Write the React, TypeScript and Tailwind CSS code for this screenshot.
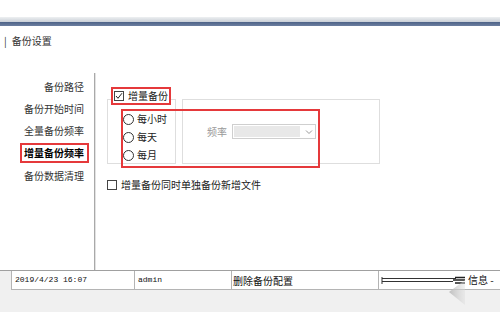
import React from "react";

const cjk = { fontFamily: '"Noto Sans CJK SC", "Noto Sans", sans-serif' };

function Radio({ label }: { label: string }) {
  return (
    <div className="flex h-[18px] items-center">
      <span className="box-border h-[11px] w-[11px] rounded-full border border-[#333] bg-white" />
      <span className="ml-[3px] text-[10px] leading-none text-[#222]">{label}</span>
    </div>
  );
}

export default function App() {
  const navItems = ["备份路径", "备份开始时间", "全量备份频率"];
  return (
    <div className="relative h-[312px] w-[500px] overflow-hidden bg-white" style={cjk}>
      {/* top chrome */}
      <div className="h-[17px] bg-white" />
      <div className="h-[5px] bg-gradient-to-b from-[#eef0f2] to-[#c9cfd6]" />
      <div className="h-[4px] bg-gradient-to-b from-[#4d6287] to-[#6c7fa0]" />

      {/* title */}
      <div className="flex h-[47px] items-start pl-[4px] pt-[8px]">
        <span className="text-[10px] leading-[14px] text-[#333]">|</span>
        <span className="ml-[5px] text-[10px] leading-[14px] text-[#333]">备份设置</span>
      </div>

      {/* body */}
      <div className="flex h-[197px]">
        <div className="flex w-[94px] flex-col pt-[2px]">
          {navItems.map((t) => (
            <div key={t} className="flex h-[22px] items-center justify-end pr-[10px] text-[10px] text-[#333]">
              {t}
            </div>
          ))}
          <div className="flex h-[23px] items-center justify-end pr-[5px]">
            <span className="box-border flex h-[20px] items-center border-2 border-[#e5393b] pl-[2px] pr-[3px] text-[10px] font-bold text-black">
              增量备份频率
            </span>
          </div>
          <div className="flex h-[22px] items-center justify-end pr-[10px] text-[10px] text-[#333]">备份数据清理</div>
        </div>
        <div className="h-full w-[2px] border-l border-[#a9a9a9] bg-[#e2e2e2]" />

        <div className="flex flex-col pl-[11px] pt-[14px]">
          {/* legend checkbox */}
          <div className="relative z-10 ml-[4px] box-border flex h-[18px] w-[60px] items-center border-2 border-[#e5393b] bg-white pl-[1px]">
            <span className="relative box-border flex h-[10px] w-[10px] items-center justify-center border border-[#444] bg-white">
              <svg width="8" height="8" viewBox="0 0 8 8" className="block">
                <path d="M1 4 L3 6.3 L7 1.2" stroke="#222" strokeWidth="1" fill="none" />
              </svg>
            </span>
            <span className="ml-[4px] text-[10px] leading-none text-[#222]">增量备份</span>
          </div>

          {/* group boxes */}
          <div className="relative -mt-[6px] flex gap-[6px]">
            <div className="box-border h-[65px] w-[69px] border border-[#dedede] pl-[15px] pt-[10px]">
              <Radio label="每小时" />
              <Radio label="每天" />
              <Radio label="每月" />
            </div>
            <div className="box-border flex h-[65px] w-[198px] items-center border border-[#dedede] pl-[24px]">
              <span className="text-[10px] leading-none text-[#999]">频率</span>
              <div className="ml-[5px] box-border flex h-[15px] w-[84px] items-center border border-[#cfcfcf] bg-white pl-[1px]">
                <div className="h-[11px] w-[66px] bg-[#e8e8e8]" />
                <svg width="8" height="6" viewBox="0 0 8 6" className="ml-[5px]">
                  <path d="M1 1.5 L4 4.5 L7 1.5" stroke="#9a9a9a" strokeWidth="1" fill="none" />
                </svg>
              </div>
            </div>
            <div className="absolute left-[14px] top-[10px] box-border h-[59px] w-[199px] border-2 border-[#e5393b]" />
          </div>

          {/* bottom checkbox */}
          <div className="mt-[16px] flex items-center">
            <span className="box-border h-[10px] w-[10px] border border-[#444] bg-white" />
            <span className="ml-[4px] text-[10px] leading-none text-[#222]">增量备份同时单独备份新增文件</span>
          </div>
        </div>
      </div>

      {/* status bar */}
      <div className="border-t border-[#a0a0a0] bg-[#f0f0f0]">
        <div className="flex h-[19px]">
          <div className="w-[11px]" />
          <div
            className="box-border flex w-[123px] items-center border-b border-l border-[#b4b4b4] bg-white pl-[3px] text-[8px] text-[#111]"
            style={{ fontFamily: '"Liberation Mono", "Noto Sans CJK SC", monospace' }}
          >
            2019/4/23 16:07
          </div>
          <div
            className="box-border flex w-[97px] items-center border-b border-l border-[#b4b4b4] bg-white pl-[3px] text-[8px] text-[#111]"
            style={{ fontFamily: '"Liberation Mono", "Noto Sans CJK SC", monospace' }}
          >
            admin
          </div>
          <div className="box-border flex w-[147px] items-center border-b border-l border-[#b4b4b4] bg-white pl-[1px] text-[10px] text-[#111]">
            删除备份配置
          </div>
          <div className="box-border flex flex-1 items-center border-b border-l border-[#b4b4b4] bg-white pl-[2px]">
            <svg width="86" height="12" viewBox="0 0 86 12" className="block">
              <path d="M1 3 V10" stroke="#333" strokeWidth="1" />
              <path d="M1 4.5 H75" stroke="#333" strokeWidth="1" />
              <path d="M1 7.5 H72" stroke="#333" strokeWidth="1" />
              <path d="M74 3.5 H84 M72 6 H84 M74 9 H84" stroke="#222" strokeWidth="1.3" />
            </svg>
            <span className="ml-[1px] text-[10px] leading-none text-[#111]">信息 -</span>
          </div>
        </div>
        <div className="h-[23px]" />
      </div>

      {/* cursor shadow overlay */}
      <svg className="absolute left-[446px] top-[277px]" width="22" height="30" viewBox="0 0 22 30">
        <defs>
          <linearGradient id="sh" x1="0" y1="0" x2="1" y2="0">
            <stop offset="0" stopColor="#b9b9b9" stopOpacity="0.9" />
            <stop offset="1" stopColor="#dcdcdc" stopOpacity="0.4" />
          </linearGradient>
        </defs>
        <polygon points="3,15 19,3 19,28" fill="url(#sh)" />
      </svg>
    </div>
  );
}
